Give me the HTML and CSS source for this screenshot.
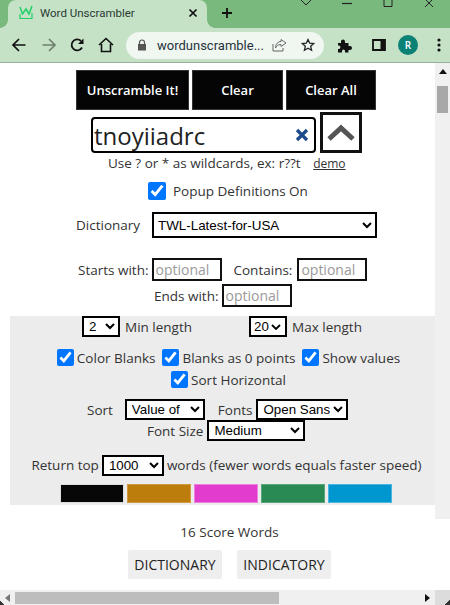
FILE: index.html
```html
<html>
  <head>
    <title>Word Unscrambler</title>
    <meta name="viewport" content="width=device-width">
    <link rel="stylesheet" href="styles.css">
  </head>
  <body>
    <!-- Browser window top -->
    <div class="tabstrip">
      <div class="tab">
        <svg class="favicon" width="16" height="15" viewBox="0 0 16 15">
          <path d="M2 2l2.5 7L8 4l3 5 3-8" fill="none" stroke="#22cf66" stroke-width="1.5"/>
          <path d="M2 9v4.5h12V8" fill="none" stroke="#22cf66" stroke-width="1.2"/>
        </svg>
        <span class="tab-title">Word Unscrambler</span>
        <svg class="tab-close" width="10" height="10" viewBox="0 0 10 10">
          <path d="M1.5 1.5l7 7M8.5 1.5l-7 7" stroke="#111" stroke-width="1.7"/>
        </svg>
      </div>
      <svg class="new-tab" width="12" height="12" viewBox="0 0 12 12">
        <path d="M6 1v10M1 6h10" stroke="#111" stroke-width="1.8"/>
      </svg>
      <div class="window-controls">
        <svg width="12" height="7" viewBox="0 0 12 7"><path d="M1 0l5 5 5-5" fill="none" stroke="#222" stroke-width="1"/></svg>
        <svg width="12" height="7" viewBox="0 0 12 7"><path d="M1 3.5h10" stroke="#222" stroke-width="1.2"/></svg>
        <svg width="12" height="7" viewBox="0 0 12 7"><path d="M2 -2h8v8.500h-8z" fill="none" stroke="#222" stroke-width="1"/></svg>
        <svg width="12" height="7" viewBox="0 0 12 7"><path d="M2 -1l8 8M10 -1l-8 8" stroke="#222" stroke-width="1"/></svg>
      </div>
    </div>
    <div class="toolbar">
      <svg class="tool back" width="16" height="16" viewBox="0 0 16 16"><path d="M14.500 8H2M8 2L2 8l6 6" fill="none" stroke="#111" stroke-width="1.700"/></svg>
      <svg class="tool forward" width="16" height="16" viewBox="0 0 16 16"><path d="M1.500 8H14M8 2l6 6-6 6" fill="none" stroke="#6f7f70" stroke-width="1.700"/></svg>
      <svg class="tool reload" width="16" height="16" viewBox="0 0 16 16"><path d="M13 10.500A5.500 5.500 0 1 1 12 4" fill="none" stroke="#111" stroke-width="1.800"/><path d="M14.500 1.500v5.500H9z" fill="#111"/></svg>
      <svg class="tool home" width="16" height="16" viewBox="0 0 16 16"><path d="M1 8l7-6.500L15 8M3.500 7v7.500h9V7" fill="none" stroke="#111" stroke-width="1.600"/></svg>
      <div class="omnibox">
        <svg width="10" height="12" viewBox="0 0 10 12"><path d="M2.500 5V3.500a2.500 2.500 0 0 1 5 0V5" fill="none" stroke="#555" stroke-width="1.200"/><path d="M1 5h8v6.500H1z" fill="#555"/></svg>
        <span class="url">wordunscramble...</span>
        <svg class="share" width="15" height="14" viewBox="0 0 15 14"><path d="M9 1.500l5 3.500-5 3.500V6.500C6 6.500 4.500 8 3.500 10 3.500 6 6 3.500 9 3.500z" fill="none" stroke="#666" stroke-width="1"/><path d="M1 6v7h10v-3" fill="none" stroke="#666" stroke-width="1"/></svg>
        <svg class="star" width="14" height="14" viewBox="0 0 14 14"><path d="M7 1.500l1.700 3.700 4 .4-3 2.700.9 4L7 10.300l-3.600 2 .9-4-3-2.700 4-.4z" fill="none" stroke="#222" stroke-width="1.300"/></svg>
      </div>
      <svg class="tool puzzle" width="15" height="15" viewBox="0 0 15 15"><path d="M1 5h3V3.500a2 2 0 0 1 4 0V5h3.500v3H13a2 2 0 0 1 0 4h-1.500v2.500H8V13a1.500 1.500 0 0 0-3 0v1.500H1V11h1a1.800 1.800 0 0 0 0-3.500H1z" fill="#111"/></svg>
      <svg class="tool sidebar" width="14" height="12" viewBox="0 0 14 12"><path d="M1 1h12v10H1z" fill="none" stroke="#111" stroke-width="1.800"/><path d="M8.500 1H13v10H8.500z" fill="#111"/></svg>
      <div class="avatar">R</div>
      <svg class="tool kebab" width="4" height="14" viewBox="0 0 4 14"><circle cx="2" cy="2" r="1.600" fill="#111"/><circle cx="2" cy="7" r="1.600" fill="#111"/><circle cx="2" cy="12" r="1.600" fill="#111"/></svg>
    </div>

    <!-- Page area -->
    <div class="viewport">
      <div class="page">
        <div class="page-inner">
          <div class="main-buttons">
            <button class="black-btn btn-unscramble">Unscramble It!</button>
            <button class="black-btn btn-clear">Clear</button>
            <button class="black-btn btn-clear-all">Clear All</button>
          </div>
          <div class="letters-row">
            <div class="letters-box">
              <input type="text" class="letters-input" value="tnoyiiadrc">
              <svg class="letters-clear" width="14" height="14" viewBox="0 0 14 14"><path d="M2 2l10 10M12 2L2 12" stroke="#1c4b8c" stroke-width="3.200"/></svg>
            </div>
            <button class="collapse-btn">
              <svg width="30" height="18" viewBox="0 0 30 18"><path d="M3 15L15 4l12 11" fill="none" stroke="#555" stroke-width="5"/></svg>
            </button>
          </div>
          <p class="wildcards">Use ? or * as wildcards, ex: r??t <a class="demo">demo</a></p>
          <label class="popup-row"><input type="checkbox" class="popup-check" checked> Popup Definitions On</label>
          <div class="dict-row">
            <span>Dictionary</span>
            <select class="dict-select"><option>TWL-Latest-for-USA</option></select>
          </div>
          <div class="filter-row filter-first">
            <span>Starts with:</span><input type="text" class="filter-input" placeholder="optional">
            <span class="contains">Contains:</span><input type="text" class="filter-input" placeholder="optional">
          </div>
          <div class="filter-row filter-ends">
            <span>Ends with:</span><input type="text" class="filter-input" placeholder="optional">
          </div>

          <div class="options">
            <div class="length-row">
              <select class="len-select"><option>2</option></select><span>Min length</span>
              <select class="len-select max"><option>20</option></select><span>Max length</span>
            </div>
            <div class="check-row first">
              <label><input type="checkbox" checked>Color Blanks</label>
              <label><input type="checkbox" checked>Blanks as 0 points</label>
              <label><input type="checkbox" checked>Show values</label>
            </div>
            <div class="check-row">
              <label><input type="checkbox" checked>Sort Horizontal</label>
            </div>
            <div class="sort-row">
              <span>Sort</span>
              <select class="sort-select"><option>Value of</option></select>
              <span class="fonts-label">Fonts</span>
              <select class="fonts-select"><option>Open Sans</option></select>
            </div>
            <div class="size-row">
              <span>Font Size</span>
              <select class="size-select"><option>Medium</option></select>
            </div>
            <div class="top-row">
              <span>Return top</span>
              <select class="top-select"><option>1000</option></select>
              <span>words (fewer words equals faster speed)</span>
            </div>
            <div class="swatches">
              <div class="swatch sw-black"></div>
              <div class="swatch sw-gold"></div>
              <div class="swatch sw-pink"></div>
              <div class="swatch sw-green"></div>
              <div class="swatch sw-blue"></div>
            </div>
          </div>

          <p class="score-words">16 Score Words</p>
          <div class="dict-links">
            <button class="grey-btn">DICTIONARY</button>
            <button class="grey-btn">INDICATORY</button>
          </div>
        </div>
      </div>
      <div class="vscroll">
        <div class="arrow-up"></div>
        <div class="vthumb"></div>
      </div>
    </div>

    <!-- Horizontal scrollbar -->
    <div class="hscroll">
      <div class="arrow-left"></div>
      <div class="hthumb"></div>
      <div class="arrow-right"></div>
      <div class="corner"></div>
    </div>
  </body>
</html>
```

FILE: styles.css
```css
/* Whole window */
html, body {
  margin: 0;
  height: 605px;
  overflow: hidden;
}
body {
  display: flex;
  flex-direction: column;
  font-family: "Open Sans", sans-serif;
  font-size: 13.5px;
  color: #222;
  background-color: white;
}

/* Tab strip */
.tabstrip {
  display: flex;
  align-items: flex-end;
  height: 28px;
  flex: none;
  background-color: #7ab97e;
  position: relative;
}
.tab {
  display: flex;
  align-items: center;
  width: 199px;
  height: 28px;
  margin-left: 8px;
  background-color: #c5e2c7;
  border-radius: 8px 8px 0 0;
  box-sizing: border-box;
  padding: 0 9px 3px 10px;
  position: relative;
}
/* Flared bottom corners of the tab */
.tab::before, .tab::after {
  content: "";
  position: absolute;
  bottom: 0;
  width: 8px;
  height: 8px;
}
.tab::before {
  left: -8px;
  background: radial-gradient(circle at 0 0, #7ab97e 7.5px, #c5e2c7 8px);
}
.tab::after {
  right: -8px;
  background: radial-gradient(circle at 100% 0, #7ab97e 7.5px, #c5e2c7 8px);
}
.tab-title {
  margin-left: 6px;
  font-family: Roboto, sans-serif;
  font-size: 11.5px;
  color: #2b3a33;
  flex: 1;
  white-space: nowrap;
}
.new-tab {
  margin: 0 0 9px 14px;
}
.window-controls {
  display: flex;
  gap: 29px;
  position: absolute;
  top: 0;
  right: 15px;
}

/* Toolbar */
.toolbar {
  display: flex;
  align-items: center;
  height: 34px;
  flex: none;
  background-color: #c5e2c7;
  border-bottom: 1px solid #9aaf9b;
  padding-left: 11px;
  box-sizing: content-box;
}
.tool {
  flex: none;
}
.forward {
  margin-left: 14px;
}
.reload {
  margin-left: 12px;
}
.home {
  margin-left: 13px;
}
.omnibox {
  display: flex;
  align-items: center;
  width: 198px;
  height: 27px;
  margin-left: 12px;
  padding-left: 11px;
  box-sizing: border-box;
  background-color: #f0f7f1;
  border-radius: 14px;
  flex: none;
}
.url {
  margin-left: 10px;
  font-family: Roboto, sans-serif;
  font-size: 13px;
  color: #26323a;
  white-space: nowrap;
  width: 113px;
}
.share {
  margin-left: 2px;
}
.star {
  margin-left: 14px;
}
.puzzle {
  margin-left: 13px;
}
.sidebar {
  margin-left: 20px;
}
.avatar {
  flex: none;
  width: 20px;
  height: 20px;
  margin-left: 12px;
  border-radius: 50%;
  background-color: #0b8275;
  color: white;
  font-size: 10px;
  font-weight: 600;
  line-height: 20px;
  text-align: center;
}
.kebab {
  margin-left: 19px;
}

/* Page and its scrollbar */
.viewport {
  display: flex;
  flex: 1;
  min-height: 0;
}
.page {
  width: 435px;
  overflow: hidden;
  flex: none;
}
.page-inner {
  width: 459px;
}
.vscroll {
  width: 15px;
  height: 456px;
  background-color: #f0f0f0;
  flex: none;
}
.arrow-up {
  width: 0;
  margin: 6px auto 0;
  border-left: 4px solid transparent;
  border-right: 4px solid transparent;
  border-bottom: 5px solid #111;
}
.vthumb {
  width: 11px;
  height: 27px;
  margin: 12px auto 0;
  background-color: #a8a8a8;
}

/* Top buttons */
.main-buttons {
  display: flex;
  gap: 3px;
  margin: 7px 0 0 76px;
}
.black-btn {
  height: 40px;
  padding: 0;
  border: 1px solid #333;
  background-color: #050505;
  color: white;
  font-family: "Open Sans", sans-serif;
  font-size: 13px;
  font-weight: 600;
}
.btn-unscramble {
  width: 113px;
}
.btn-clear {
  width: 91px;
}
.btn-clear-all {
  width: 90px;
}

/* Letters input */
.letters-row {
  display: flex;
  margin: 2px 0 0 91px;
}
.letters-box {
  display: flex;
  align-items: center;
  width: 225px;
  height: 36px;
  margin-top: 5px;
  box-sizing: border-box;
  border: 2px solid black;
  border-radius: 4px;
  padding-right: 5px;
}
.letters-input {
  flex: 1;
  min-width: 0;
  border: none;
  outline: none;
  padding: 0 0 0 1px;
  font-family: "Open Sans", sans-serif;
  font-size: 24px;
  color: #222;
  background: none;
}
.collapse-btn {
  display: flex;
  align-items: center;
  justify-content: center;
  width: 42px;
  height: 41px;
  margin-left: 4px;
  padding: 0;
  border: 3px solid #111;
  background-color: white;
}
.wildcards {
  margin: 1px 0 0 108px;
  line-height: 19px;
  color: #333;
}
.demo {
  margin-left: 9px;
  font-size: 12px;
  text-decoration: underline;
}

/* Popup and dictionary */
.popup-row {
  display: flex;
  align-items: center;
  margin: 9px 0 0 148px;
  height: 18px;
  color: #333;
}
.popup-row input {
  width: 18px;
  height: 18px;
  margin: 0 7px 0 0;
}
.dict-row {
  display: flex;
  align-items: center;
  margin: 12px 0 0 76px;
  color: #333;
}
.dict-row span {
  width: 76px;
}
.dict-select {
  width: 225px;
  height: 26px;
  border: 2px solid black;
  border-radius: 0;
  background-color: white;
  font-family: "Liberation Sans", sans-serif;
  font-size: 13.4px;
}

/* Starts, contains, ends */
.filter-row {
  display: flex;
  align-items: center;
  color: #333;
}
.filter-first {
  margin: 20px 0 0 78px;
}
.filter-ends {
  margin: 3px 0 0 154px;
}
.filter-input {
  width: 70px;
  height: 23px;
  margin-left: 3px;
  padding: 0 0 0 2px;
  box-sizing: border-box;
  border: 2px solid #111;
  border-radius: 0;
  font-family: "Open Sans", sans-serif;
  font-size: 14px;
}
.filter-input::placeholder {
  color: #9a9a9a;
}
.contains {
  margin: 0 2px 0 12px;
}

/* Grey options panel */
.options {
  width: 433px;
  height: 189px;
  margin: 9px 16px 0 10px;
  background-color: #ececec;
  color: #333;
  overflow: hidden;
}
.options select {
  border: 2px solid black;
  border-radius: 0;
  background-color: white;
  font-size: 13.333px;
  font-family: "Liberation Sans", sans-serif;
  padding-left: 1px;
}
.length-row {
  display: flex;
  align-items: center;
  height: 21px;
  padding-left: 72px;
}
.length-row span {
  margin-left: 5px;
}
.len-select {
  width: 38px;
  height: 21px;
}
/* Native arrow cuts off the "20", so this one draws its own */
.options .len-select.max {
  margin-left: 57px;
  padding-left: 3px;
  appearance: none;
  background: white url("data:image/svg+xml,%3Csvg xmlns='http://www.w3.org/2000/svg' width='10' height='6'%3E%3Cpath d='M1 1l4 4 4-4' fill='none' stroke='black' stroke-width='1.800'/%3E%3C/svg%3E") no-repeat right 4px center;
}
.check-row {
  display: flex;
  justify-content: center;
  gap: 7px;
  margin-top: 1px;
  padding-left: 4px;
  height: 21px;
}
.check-row.first {
  margin-top: 10px;
}
.check-row label {
  display: flex;
  align-items: center;
}
.check-row input {
  width: 17px;
  height: 17px;
  margin: 0 3px 0 0;
}
.sort-row {
  display: flex;
  align-items: center;
  height: 21px;
  margin-top: 9px;
  padding-left: 77px;
}
.sort-select {
  width: 80px;
  height: 21px;
  margin-left: 12px;
}
.fonts-label {
  margin-left: 13px;
}
.fonts-select {
  width: 92px;
  height: 21px;
  margin-left: 4px;
}
.size-row {
  display: flex;
  align-items: center;
  height: 21px;
  padding-left: 137px;
}
.size-select {
  width: 98px;
  height: 21px;
  margin-left: 4px;
}
.top-row {
  display: flex;
  align-items: center;
  justify-content: center;
  height: 22px;
  margin-top: 13px;
  gap: 3px;
}
.top-select {
  width: 62px;
  height: 21px;
}
.swatches {
  display: flex;
  justify-content: center;
  gap: 3px;
  margin-top: 8px;
  padding-right: 2px;
}
.swatch {
  width: 64px;
  height: 19px;
  box-sizing: border-box;
  border: 1px solid #ddd;
}
.sw-black {
  background-color: #070707;
}
.sw-gold {
  background-color: #bd7d0c;
  border-color: #d09a45;
}
.sw-pink {
  background-color: #e23cce;
  border-color: #ee80e0;
}
.sw-green {
  background-color: #2a8a54;
  border-color: #5aa67c;
}
.sw-blue {
  background-color: #0096cf;
  border-color: #4cb5e2;
}

/* Result words */
.score-words {
  margin: 17px 0 0;
  line-height: 20px;
  text-align: center;
  color: #333;
}
.dict-links {
  display: flex;
  justify-content: center;
  gap: 15px;
  margin-top: 8px;
}
.grey-btn {
  width: 94px;
  height: 29px;
  padding: 0;
  border: none;
  border-radius: 2px;
  background-color: #eeeeee;
  color: #222;
  font-family: "Open Sans", sans-serif;
  font-size: 14px;
}

/* Bottom scrollbar */
.hscroll {
  display: flex;
  align-items: center;
  height: 15px;
  flex: none;
  background: linear-gradient(45deg, #333 3px, #f0f0f0 3.5px);
}
.arrow-left {
  width: 0;
  margin-left: 5px;
  border-top: 4px solid transparent;
  border-bottom: 4px solid transparent;
  border-right: 5px solid #777;
}
.hthumb {
  width: 264px;
  height: 12px;
  margin-left: 5px;
  background-color: #bdbdbd;
}
.arrow-right {
  width: 0;
  margin-left: 146px;
  border-top: 4px solid transparent;
  border-bottom: 4px solid transparent;
  border-left: 5px solid #111;
}
.corner {
  width: 15px;
  height: 15px;
  margin-left: 5px;
  background: linear-gradient(135deg, #dcdcdc 17px, #333 17.5px);
}
```
